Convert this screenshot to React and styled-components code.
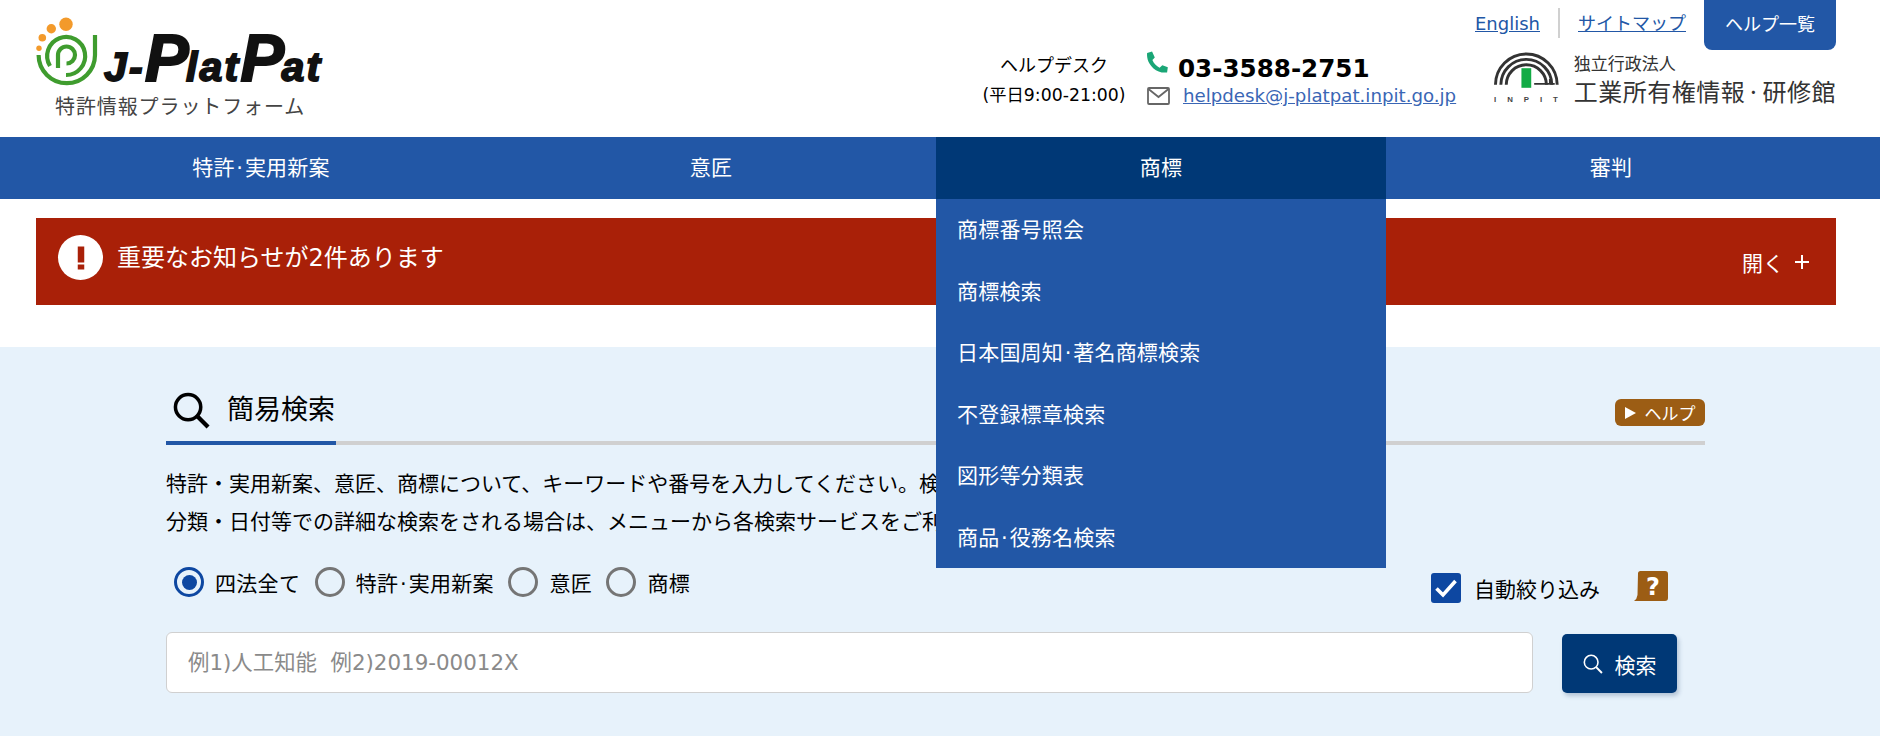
import React from "react";
import styled, { createGlobalStyle } from "styled-components";

const JP = `"DejaVu Sans", "Noto Sans CJK JP", sans-serif`;

const Global = createGlobalStyle`
  html, body { margin: 0; padding: 0; background: #fff; }
  body { font-family: ${JP}; color: #000; width: 1880px; height: 740px; overflow: hidden; }
  * { box-sizing: border-box; }
`;

const Page = styled.div`
  width: 1880px;
`;

const Header = styled.header`
  height: 137px;
  display: flex;
  justify-content: space-between;
  padding: 0 44px 0 36px;
`;

const Brand = styled.div`
  width: 300px;
  display: flex;
  flex-direction: column;
  padding-top: 16px;
`;

const BrandTop = styled.div`
  display: flex;
  align-items: flex-start;
  height: 78px;
`;

const Wordmark = styled.div`
  font-family: "Liberation Sans", sans-serif;
  font-style: italic;
  font-weight: 700;
  line-height: 1;
  color: #111;
  -webkit-text-stroke: 1.8px #111;
  display: flex;
  align-items: baseline;
  margin: 18px 0 0 2px;
  letter-spacing: 2.2px;
`;

const WordSmall = styled.span`
  font-size: 41px;
`;

const WordBig = styled.span`
  font-size: 66px;
  line-height: 48px;
  letter-spacing: -3px;
`;

const BrandSub = styled.div`
  margin-left: 19px;
  font-family: "Noto Sans CJK JP", sans-serif;
  font-size: 20px;
  letter-spacing: 0.9px;
  line-height: 24px;
  color: #444;
  white-space: nowrap;
`;

const HeaderRight = styled.div`
  display: flex;
  flex-direction: column;
  align-items: flex-end;
`;

const TopLinks = styled.div`
  display: flex;
  align-items: flex-start;
  height: 50px;
`;

const TopLink = styled.a`
  font-size: ${(p) => p.$size}px;
  line-height: 24px;
  margin-top: 12px;
  color: #2257a6;
  text-decoration: underline;
`;

const Divider = styled.span`
  width: 2px;
  height: 30px;
  margin: 8px 18px 0 18px;
  background: #d0d0d0;
`;

const HelpList = styled.a`
  width: 132px;
  height: 50px;
  margin-left: 18px;
  padding-bottom: 4px;
  display: flex;
  align-items: center;
  justify-content: center;
  background: #2257a6;
  color: #fff;
  font-size: 18px;
  border-radius: 0 0 8px 8px;
`;

const ContactRow = styled.div`
  display: flex;
  align-items: flex-start;
  margin-top: -4px;
`;

const Hours = styled.div`
  width: 146px;
  margin-top: 6px;
  text-align: center;
`;

const HoursTitle = styled.div`
  font-size: 18px;
  line-height: 28px;
`;

const HoursTime = styled.div`
  font-size: 17.3px;
  line-height: 24px;
  margin-top: 3px;
  white-space: nowrap;
`;

const Contact = styled.div`
  margin-left: 19px;
  width: 348px;
  padding-top: 6px;
`;

const PhoneLine = styled.div`
  display: flex;
  align-items: center;
  gap: 10px;
  height: 32px;
`;

const PhoneNumber = styled.span`
  font-size: 24.6px;
  font-weight: 700;
`;

const PhoneGlyph = styled.svg`
  margin-bottom: 12px;
`;

const MailLine = styled.div`
  display: flex;
  align-items: center;
  gap: 13px;
  padding-left: 1px;
`;

const MailLink = styled.a`
  font-size: 18.2px;
  line-height: 24px;
  color: #3a66b5;
  text-decoration: underline;
  white-space: nowrap;
`;

const Org = styled.div`
  display: flex;
  width: 342px;
  margin-top: 6px;
  gap: 15px;
`;

const OrgText = styled.div`
  font-family: "Noto Sans CJK JP", sans-serif;
  color: #333;
  white-space: nowrap;
`;

const OrgSmall = styled.div`
  font-size: 17px;
  line-height: 24.5px;
  margin-top: -1px;
`;

const OrgLarge = styled.div`
  font-size: 24px;
  line-height: 30px;
  letter-spacing: 0.5px;
`;

const Dot = styled.span`
  margin: 0 1.7px;
`;

const Nav = styled.nav`
  height: 62px;
  background: #2257a6;
  padding-left: 36px;
  display: flex;
`;

const NavItem = styled.div`
  position: relative;
  width: 450px;
  height: 62px;
  padding-bottom: 5px;
  display: flex;
  align-items: center;
  justify-content: center;
  color: #fff;
  font-size: 21px;
  letter-spacing: 0.2px;
  background: ${(p) => (p.$active ? "#003876" : "transparent")};
`;

const Dropdown = styled.ul`
  position: absolute;
  top: 62px;
  left: 0;
  width: 450px;
  height: 369px;
  margin: 0;
  padding: 0;
  list-style: none;
  background: #2257a6;
  z-index: 5;
`;

const DropItem = styled.li`
  height: 61.5px;
  padding: 18px 0 0 21px;
  line-height: 26px;
  font-size: 21px;
  color: #fff;
`;

const Alert = styled.div`
  margin: 19px 44px 0 36px;
  height: 87px;
  background: #a92008;
  color: #fff;
  display: flex;
  justify-content: space-between;
  padding: 17px 27px 0 22px;
`;

const AlertLead = styled.div`
  display: flex;
  align-items: center;
  gap: 14px;
  height: 45px;
`;

const AlertBadge = styled.span`
  width: 45px;
  height: 45px;
  border-radius: 50%;
  background: #fff;
  display: flex;
  align-items: center;
  justify-content: center;
`;

const AlertText = styled.span`
  font-size: 24px;
  line-height: 30px;
`;

const AlertToggle = styled.div`
  display: flex;
  align-items: center;
  gap: 11px;
  height: 40px;
  margin-top: 7px;
  font-size: 21px;
`;

const Panel = styled.section`
  margin-top: 42px;
  height: 389px;
  background: #e7f2fb;
  padding: 0 175px 0 166px;
`;

const TitleRow = styled.div`
  height: 98px;
  border-bottom: 4px solid #d0d0d0;
  display: flex;
  align-items: flex-end;
  justify-content: space-between;
  padding-bottom: 11px;
`;

const Title = styled.h2`
  margin: 0;
  display: flex;
  align-items: center;
  gap: 17px;
  font-size: 27px;
  font-weight: 400;
  line-height: 40px;
  position: relative;
  padding-left: 7px;
  height: 40px;
`;

const TitleAccent = styled.span`
  position: absolute;
  left: 0;
  bottom: -15px;
  width: 170px;
  height: 4px;
  background: #2257a6;
`;

const HelpButton = styled.a`
  width: 90px;
  height: 27px;
  margin-bottom: 4px;
  background: #9c5d14;
  border-radius: 6px;
  color: #fff;
  font-size: 17px;
  display: flex;
  align-items: center;
  justify-content: center;
  gap: 9px;
`;

const HelpArrow = styled.span`
  width: 0;
  height: 0;
  border-left: 11px solid #fff;
  border-top: 6px solid transparent;
  border-bottom: 6px solid transparent;
`;

const Description = styled.p`
  margin: 20px 0 0;
  font-size: 21px;
  line-height: 38px;
  white-space: nowrap;
`;

const OptionsRow = styled.div`
  height: 65px;
  margin-top: 26px;
  padding-left: 8px;
  display: flex;
  align-items: flex-start;
  justify-content: space-between;
`;

const RadioGroup = styled.div`
  display: flex;
  align-items: center;
  height: 30px;
`;

const RadioOption = styled.label`
  display: flex;
  align-items: center;
  gap: 11px;
  margin-right: 14.5px;
  font-size: 21px;
  letter-spacing: 0.3px;
`;

const RadioLabel = styled.span`
  white-space: nowrap;
`;

const RadioMark = styled.span`
  width: 30px;
  height: 30px;
  border-radius: 50%;
  border: 3.5px solid ${(p) => (p.$on ? "#0d47a1" : "#757575")};
  display: flex;
  align-items: center;
  justify-content: center;
  &::after {
    content: "";
    width: 15px;
    height: 15px;
    border-radius: 50%;
    background: ${(p) => (p.$on ? "#0d47a1" : "transparent")};
  }
`;

const AutoFilter = styled.div`
  display: flex;
  align-items: center;
  height: 34px;
  margin-top: 4px;
  margin-right: 37px;
  font-size: 21px;
`;

const CheckBox = styled.span`
  width: 30px;
  height: 30px;
  border-radius: 3px;
  background: #0d47a1;
  display: flex;
  align-items: center;
  justify-content: center;
  margin-right: 13px;
`;

const QuestionMark = styled.span`
  margin-left: 34px;
  position: relative;
  top: -2px;
  width: 34px;
  height: 31px;
  display: block;
`;

const SearchRow = styled.div`
  display: flex;
  align-items: flex-start;
  gap: 29px;
`;

const SearchInput = styled.input`
  width: 1367px;
  height: 61px;
  border: 1px solid #d0d0d0;
  border-radius: 6px;
  background: #fff;
  padding: 0 21px;
  font-family: ${JP};
  font-size: 21.4px;
  outline: none;
  &::placeholder {
    color: #8a8a8a;
    opacity: 1;
  }
`;

const SearchButton = styled.button`
  margin-top: 2px;
  width: 115px;
  height: 59px;
  border: none;
  border-radius: 5px;
  background: #003876;
  color: #fff;
  font-family: ${JP};
  font-size: 21px;
  display: flex;
  align-items: center;
  justify-content: center;
  gap: 12px;
  box-shadow: 2px 3px 4px rgba(60, 90, 130, 0.3);
`;

const SearchIcon = ({ size, color, width }) => (
  <svg width={size} height={size} viewBox="0 0 38 38" fill="none">
    <circle cx="15.5" cy="15.5" r="13" stroke={color} strokeWidth={width} />
    <line x1="25" y1="25" x2="36" y2="36" stroke={color} strokeWidth={width + 0.8} />
  </svg>
);

const LogoMark = () => (
  <svg width="66" height="74" viewBox="36 16 66 74" fill="none">
    <g fill="#f39a2b">
      <circle cx="66" cy="24.3" r="6.7" />
      <circle cx="51.3" cy="28.7" r="4.7" />
      <circle cx="42.3" cy="37.7" r="3.8" />
      <circle cx="39" cy="48.3" r="2.7" />
    </g>
    <g stroke="#3f9c2e" fill="none" strokeWidth="4.2">
      <path d="M95 35 V55 A28.2 28.2 0 1 1 38.6 55" />
      <path d="M50 66 A19 19 0 1 1 66 75" />
      <path d="M58 68 V55 A8.500 8.500 0 1 1 66.500 63.500" />
    </g>
  </svg>
);

const InpitMark = () => (
  <svg width="66" height="52" viewBox="0 0 66 52" fill="none">
    <g stroke="#333" fill="none" strokeWidth="3">
      <path d="M1.500 33 A31.500 31.500 0 0 1 64.500 33" />
      <path d="M7 33 A26 26 0 0 1 59 33" />
      <path d="M12.500 33 A20.500 20.500 0 0 1 53.500 33" />
    </g>
    <path d="M41 32 H62 M57 32 V27" stroke="#333" strokeWidth="1.800" fill="none" />
    <rect x="28" y="16" width="10" height="20" fill="#12ab45" />
    <text x="0" y="51" fontFamily="Liberation Sans, sans-serif" fontWeight="700" fontSize="8" letterSpacing="11.200" fill="#444">INPIT</text>
  </svg>
);

const PhoneIcon = () => (
  <PhoneGlyph width="22" height="22" viewBox="0 0 24 24">
    <path fill="#1aa676" d="M6.600 0.600 L1.200 2.200 C0.600 8.600 3.200 14.600 8.200 19 C12 22.400 17.200 24 23 23.400 L23.800 17.800 L17.800 15.600 L14.800 18.200 C11.400 16.600 8.400 13.400 7 9.800 L9.600 7 Z" />
  </PhoneGlyph>
);

const MailIcon = () => (
  <svg width="23" height="18" viewBox="0 0 23 18" fill="none" stroke="#666" strokeWidth="1.800">
    <rect x="1" y="1" width="21" height="16" rx="1" />
    <path d="M1.500 2 L11.500 10 L21.500 2" />
  </svg>
);

const Check = () => (
  <svg width="24" height="20" viewBox="0 0 24 20" fill="none">
    <path d="M2.500 10.500 L9 17 L21.500 3" stroke="#fff" strokeWidth="3.600" />
  </svg>
);

const QuestionIcon = () => (
  <QuestionMark>
    <svg width="34" height="31" viewBox="0 0 34 31">
      <path fill="#9c5d14" d="M4 2.500 Q4 0 6.500 0 H31 Q34 0 34 3 V27 Q34 30 31 30 H0 Q3 28 3.500 24 Z" />
      <text x="19" y="24" textAnchor="middle" fontFamily="DejaVu Sans, sans-serif" fontWeight="700" fontSize="24" fill="#fff">?</text>
    </svg>
  </QuestionMark>
);

const Dotted = ({ text }) => {
  const [head, tail] = text.split("·");
  if (tail === undefined) return text;
  return (
    <span>
      {head}
      <Dot>·</Dot>
      {tail}
    </span>
  );
};

const menuItems = ["商標番号照会", "商標検索", "日本国周知·著名商標検索", "不登録標章検索", "図形等分類表", "商品·役務名検索"];
const radios = ["四法全て", "特許·実用新案", "意匠", "商標"];

export default function App() {
  return (
    <Page>
      <Global />
      <Header>
        <Brand>
          <BrandTop>
            <LogoMark />
            <Wordmark>
              <WordSmall>J-</WordSmall>
              <WordBig>P</WordBig>
              <WordSmall>lat</WordSmall>
              <WordBig>P</WordBig>
              <WordSmall>at</WordSmall>
            </Wordmark>
          </BrandTop>
          <BrandSub>特許情報プラットフォーム</BrandSub>
        </Brand>
        <HeaderRight>
          <TopLinks>
            <TopLink $size={18}>English</TopLink>
            <Divider />
            <TopLink $size={18}>サイトマップ</TopLink>
            <HelpList>ヘルプ一覧</HelpList>
          </TopLinks>
          <ContactRow>
            <Hours>
              <HoursTitle>ヘルプデスク</HoursTitle>
              <HoursTime>(平日9:00-21:00)</HoursTime>
            </Hours>
            <Contact>
              <PhoneLine>
                <PhoneIcon />
                <PhoneNumber>03-3588-2751</PhoneNumber>
              </PhoneLine>
              <MailLine>
                <MailIcon />
                <MailLink>helpdesk@j-platpat.inpit.go.jp</MailLink>
              </MailLine>
            </Contact>
            <Org>
              <InpitMark />
              <OrgText>
                <OrgSmall>独立行政法人</OrgSmall>
                <OrgLarge>
                  <Dotted text="工業所有権情報·研修館" />
                </OrgLarge>
              </OrgText>
            </Org>
          </ContactRow>
        </HeaderRight>
      </Header>
      <Nav>
        <NavItem>
          <Dotted text="特許·実用新案" />
        </NavItem>
        <NavItem>意匠</NavItem>
        <NavItem $active>
          商標
          <Dropdown>
            {menuItems.map((m) => (
              <DropItem key={m}>
                <Dotted text={m} />
              </DropItem>
            ))}
          </Dropdown>
        </NavItem>
        <NavItem>審判</NavItem>
      </Nav>
      <Alert>
        <AlertLead>
          <AlertBadge>
            <svg width="8" height="24" viewBox="0 0 8 24">
              <rect x="0.750" y="0.500" width="6.500" height="16" fill="#a92008" />
              <rect x="0.750" y="18.500" width="6.500" height="5" fill="#a92008" />
            </svg>
          </AlertBadge>
          <AlertText>重要なお知らせが2件あります</AlertText>
        </AlertLead>
        <AlertToggle>
          <span>開く</span>
          <svg width="14" height="14" viewBox="0 0 14 14">
            <path d="M0 7 H14 M7 0 V14" stroke="#fff" strokeWidth="2" />
          </svg>
        </AlertToggle>
      </Alert>
      <Panel>
        <TitleRow>
          <Title>
            <SearchIcon size={37} color="#000" width={3.6} />
            簡易検索
            <TitleAccent />
          </Title>
          <HelpButton>
            <HelpArrow />
            ヘルプ
          </HelpButton>
        </TitleRow>
        <Description>
          特許・実用新案、意匠、商標について、キーワードや番号を入力してください。検索対象を選択できます。
          <br />
          分類・日付等での詳細な検索をされる場合は、メニューから各検索サービスをご利用ください。
        </Description>
        <OptionsRow>
          <RadioGroup>
            {radios.map((r, i) => (
              <RadioOption key={r}>
                <RadioMark $on={i === 0} />
                <RadioLabel>
                  <Dotted text={r} />
                </RadioLabel>
              </RadioOption>
            ))}
          </RadioGroup>
          <AutoFilter>
            <CheckBox>
              <Check />
            </CheckBox>
            自動絞り込み
            <QuestionIcon />
          </AutoFilter>
        </OptionsRow>
        <SearchRow>
          <SearchInput placeholder="例1)人工知能  例2)2019-00012X" readOnly />
          <SearchButton>
            <SearchIcon size={20} color="#fff" width={3} />
            検索
          </SearchButton>
        </SearchRow>
      </Panel>
    </Page>
  );
}
